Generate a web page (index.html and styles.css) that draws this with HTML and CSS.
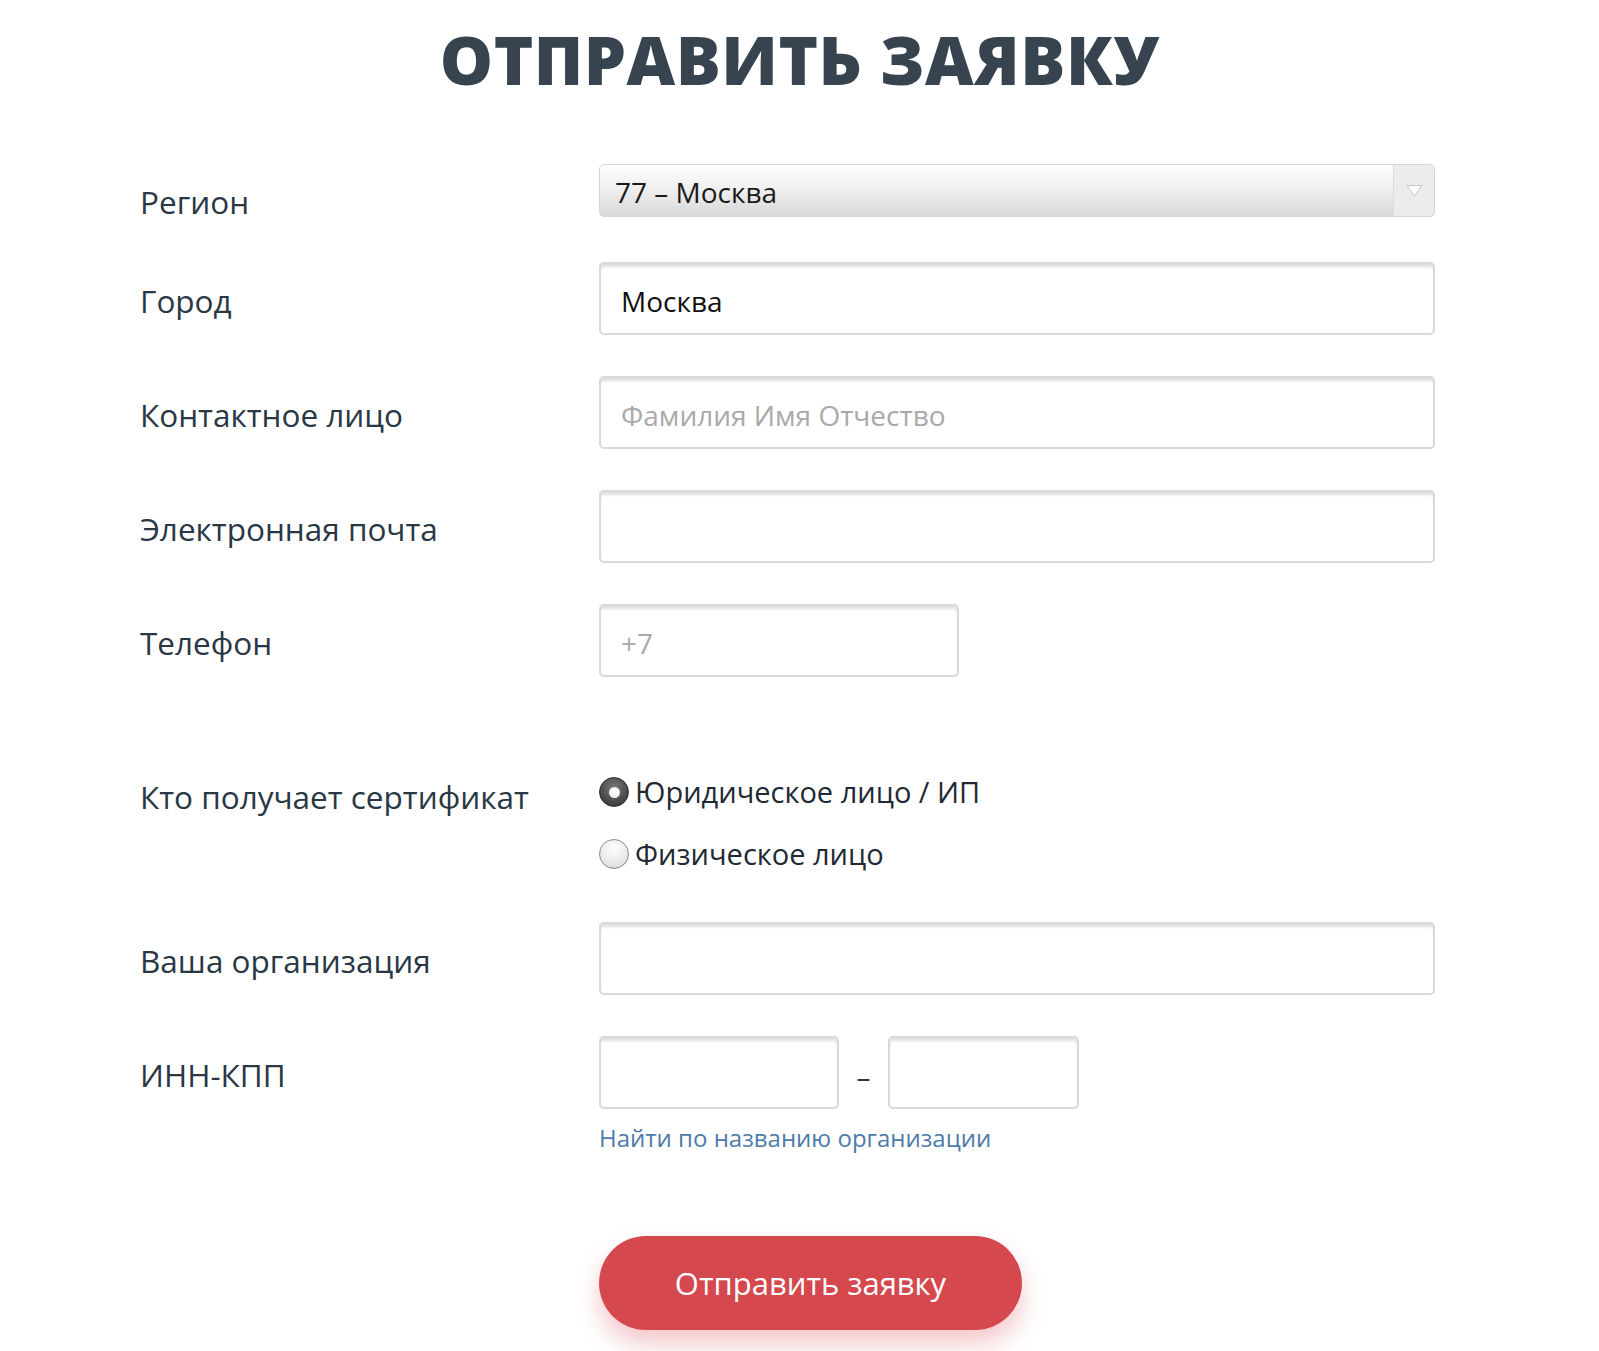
FILE: index.html
```html
<!DOCTYPE html>
<html lang="ru">
<head>
<meta charset="utf-8">
<title>Отправить заявку</title>
<link rel="stylesheet" href="styles.css">
</head>
<body>
<div class="page">
  <h1 class="title">ОТПРАВИТЬ ЗАЯВКУ</h1>
  <form class="form">
    <div class="row row-select">
      <div class="label">Регион</div>
      <div class="field">
        <div class="select">
          <span class="select-value">77 – Москва</span>
          <span class="select-arrow"><svg width="17" height="13" viewBox="0 0 17 13"><path d="M1 1.5 L16 1.5 L8.5 12 Z" fill="#fff" stroke="#c4c4c4" stroke-width="1"/></svg></span>
        </div>
      </div>
    </div>
    <div class="row">
      <div class="label">Город</div>
      <div class="field"><input class="input" type="text" value="Москва"></div>
    </div>
    <div class="row">
      <div class="label">Контактное лицо</div>
      <div class="field"><input class="input" type="text" placeholder="Фамилия Имя Отчество"></div>
    </div>
    <div class="row">
      <div class="label">Электронная почта</div>
      <div class="field"><input class="input" type="text"></div>
    </div>
    <div class="row row-phone">
      <div class="label">Телефон</div>
      <div class="field"><input class="input input-phone" type="text" placeholder="+7"></div>
    </div>
    <div class="row row-radio">
      <div class="label">Кто получает сертификат</div>
      <div class="field radios">
        <label class="radio"><span class="dot dot-on"></span>Юридическое лицо / ИП</label>
        <label class="radio"><span class="dot"></span>Физическое лицо</label>
      </div>
    </div>
    <div class="row">
      <div class="label">Ваша организация</div>
      <div class="field"><input class="input" type="text"></div>
    </div>
    <div class="row row-inn">
      <div class="label">ИНН-КПП</div>
      <div class="field inn">
        <input class="input input-inn" type="text">
        <span class="dash">–</span>
        <input class="input input-kpp" type="text">
      </div>
    </div>
    <div class="row row-link">
      <div></div>
      <div class="field"><a class="link" href="#">Найти по названию организации</a></div>
    </div>
    <div class="row row-btn">
      <div></div>
      <div class="field"><button class="btn" type="button">Отправить заявку</button></div>
    </div>
  </form>
</div>
</body>
</html>
```
FILE: styles.css
```css
html, body {
  margin: 0;
  padding: 0;
  background: #ffffff;
}
body {
  font-family: "Open Sans", "Noto Sans", sans-serif;
  color: #2a3744;
}
.page {
  width: 1599px;
}
.title {
  margin: 0;
  padding-top: 10px;
  height: 150px;
  box-sizing: border-box;
  text-align: center;
  font-family: "Open Sans", sans-serif;
  font-weight: 800;
  font-stretch: 92%;
  font-size: 67px;
  line-height: 98px;
  color: #37444f;
  letter-spacing: 0.5px;
}
.form {
  padding-left: 140px;
  padding-top: 14px;
}
.row {
  display: grid;
  grid-template-columns: 459px 836px;
  align-items: center;
  margin-bottom: 41px;
}
.label {
  font-size: 31.5px;
  color: #2a3744;
  padding-top: 4px;
}
.row-select {
  height: 73px;
  align-items: start;
  margin-bottom: 25px;
}
.row-select .label {
  padding-top: 16px;
}
.select {
  height: 53px;
  box-sizing: border-box;
  border: 1px solid #d6d6d6;
  border-radius: 5px;
  background: linear-gradient(#ffffff 0%, #eeeeee 50%, #d9d9d9 100%);
  display: flex;
  align-items: center;
  position: relative;
}
.select-value {
  flex: 1;
  padding-left: 15px;
  font-size: 28px;
  color: #1a1a1a;
  padding-top: 2px;
}
.select-arrow {
  width: 40px;
  align-self: stretch;
  display: flex;
  align-items: center;
  justify-content: center;
  background: #ececec;
  border-left: 1px solid #dcdcdc;
  border-radius: 0 5px 5px 0;
}
.input {
  display: block;
  width: 836px;
  height: 73px;
  box-sizing: border-box;
  border: 2px solid #d9d9d9;
  border-radius: 5px;
  box-shadow: inset 0 4px 3px -1px rgba(0, 0, 0, 0.13);
  padding: 4px 20px 0;
  font-family: "Open Sans", sans-serif;
  font-size: 28px;
  color: #111111;
  background: #fff;
  outline: none;
}
.input::placeholder {
  color: #a9a9a9;
}
.input-phone {
  width: 360px;
}
.row-phone {
  margin-bottom: 94px;
}
.row-radio {
  align-items: start;
  margin-bottom: 47px;
}
.row-radio .label {
  padding-top: 5px;
  line-height: 42px;
}
.radios {
  display: flex;
  flex-direction: column;
  gap: 20px;
}
.radio {
  display: flex;
  align-items: center;
  font-size: 29px;
  line-height: 42px;
  color: #1f2a35;
  height: 42px;
}
.dot {
  width: 30px;
  height: 30px;
  box-sizing: border-box;
  border-radius: 50%;
  border: 1.5px solid #8a8a8a;
  background: radial-gradient(circle at 50% 30%, #ffffff 0%, #e9e9e9 60%, #cfcfcf 100%);
  margin-right: 6px;
  position: relative;
  flex: none;
}
.dot-on {
  border-color: #2e2e2e;
  background: radial-gradient(circle at 50% 35%, #7a7a7a 0%, #4a4a4a 60%, #2f2f2f 100%);
}
.dot-on::after {
  content: "";
  position: absolute;
  left: 50%;
  top: 50%;
  width: 11px;
  height: 11px;
  margin: -5.5px 0 0 -5.5px;
  border-radius: 50%;
  background: radial-gradient(circle at 50% 40%, #ffffff 0%, #e6e6e6 100%);
}
.inn {
  display: flex;
  align-items: center;
}
.input-inn {
  width: 240px;
}
.input-kpp {
  width: 191px;
}
.dash {
  width: 49px;
  text-align: center;
  font-size: 28px;
  color: #333;
  padding-top: 6px;
}
.row-inn {
  margin-bottom: 12px;
}
.row-link {
  margin-bottom: 82px;
}
.link {
  font-size: 24px;
  color: #4d7ba9;
  text-decoration: none;
}
.btn {
  width: 423px;
  height: 94px;
  border: none;
  border-radius: 47px;
  background: #d5484e;
  color: #ffffff;
  font-family: "Open Sans", sans-serif;
  font-size: 31px;
  box-shadow: 0 14px 24px rgba(214, 72, 78, 0.3);
  cursor: pointer;
}
```
